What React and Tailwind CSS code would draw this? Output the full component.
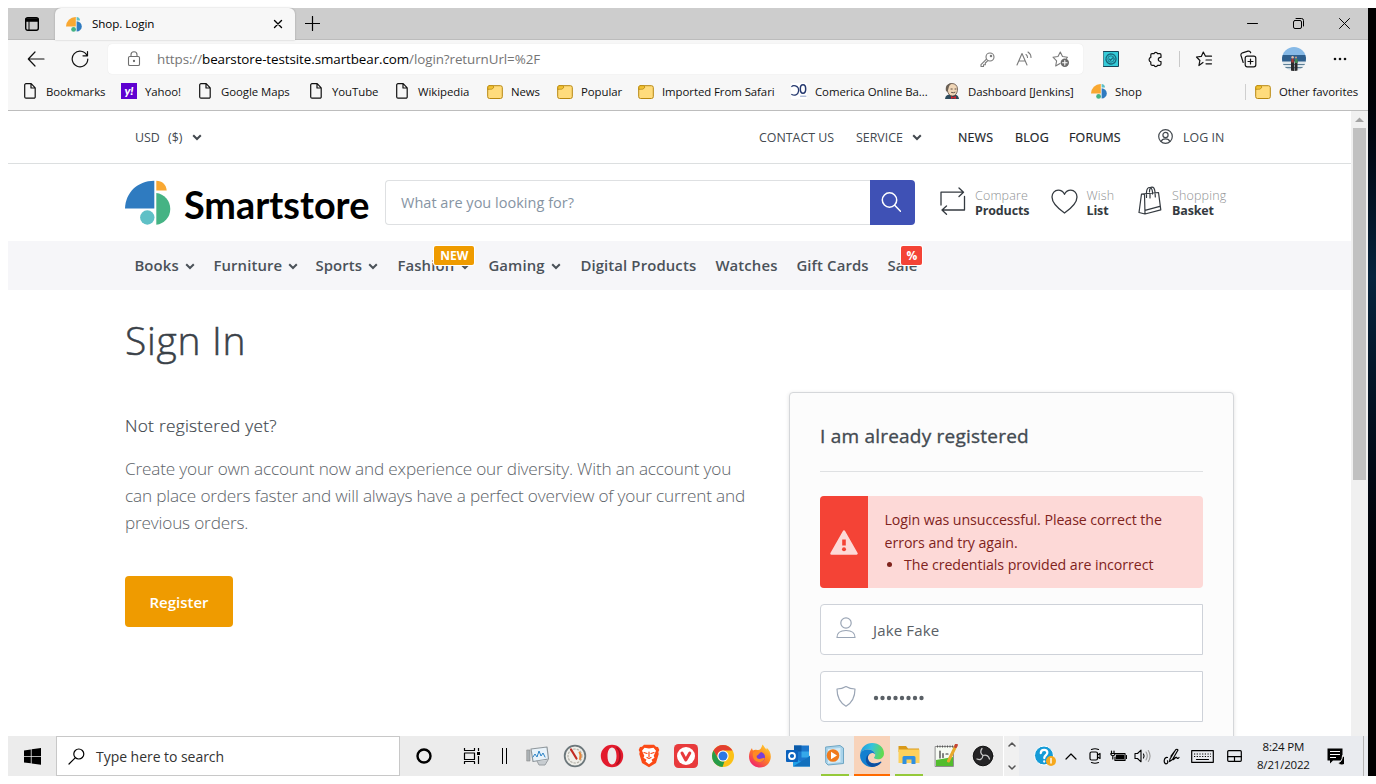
import React from "react";

const Svg = ({ w = 16, h, vb, className = "", sw = 1, children }) => (
  <svg width={w} height={h || w} viewBox={vb || `0 0 ${w} ${h || w}`} fill="none" stroke="currentColor" strokeWidth={sw} strokeLinecap="round" strokeLinejoin="round" className={"shrink-0 " + className}>
    {children}
  </svg>
);

const ShopMark = () => (
  <Svg w={16}>
    <g stroke="none">
      <path d="M0 10.500A9.500 9.500 0 0 1 9.800 1v9.500Z" fill="#f9a832" />
      <path d="M10.600 1A3.600 3.600 0 0 1 14 4.400h-3.400Z" fill="#5fc0c6" />
      <path d="M10.600 5.200a5.200 5.200 0 0 1 0 10.400Z" fill="#2f7bc0" />
      <circle cx="7.600" cy="13.400" r="2.400" fill="#45b384" />
    </g>
  </Svg>
);

const PageIcon = () => (
  <Svg w={16} sw={1.2}>
    <path d="M4 .7h5.200l4 4.200V14a1.200 1.200 0 0 1-1.200 1.200H4A1.300 1.300 0 0 1 2.700 14V2A1.300 1.300 0 0 1 4 .7ZM9 .9V5h4" />
  </Svg>
);

const FolderIcon = () => (
  <Svg w={16} sw={1} className="mt-px">
    <rect x=".7" y="1.700" width="14.600" height="12.800" rx="1.800" fill="#ffdc7c" stroke="#b8880f" />
    <path d="M.8 5V3.200C.8 2.200 1.500 1.700 2.300 1.700H5.500L7 3 5.500 4.800Z" fill="#f2c230" stroke="#b8880f" strokeWidth=".8" />
  </Svg>
);

const YahooIcon = () => (
  <span className="flex h-4 w-4 shrink-0 items-center justify-center bg-[#5f01d1] font-['Lato',sans-serif] text-[12px] leading-none font-black italic text-white">y!</span>
);

const ComericaIcon = () => (
  <Svg w={16} className="bg-white">
    <path d="M6 3.800C4 2 1.500 2.300.8 3.500M.8 11.500c2.500 1.500 6.200.5 6.700-3.200.3-2-.2-3.800-1.500-4.800" stroke="#24386e" strokeWidth="1.300" />
    <ellipse cx="12" cy="6" rx="2.700" ry="4.200" stroke="#24386e" strokeWidth="1.500" />
    <path d="M9.500 13.200h5.500" stroke="#8ea0c8" />
  </Svg>
);

const JenkinsIcon = () => (
  <Svg w={16}>
    <g stroke="none">
      <path d="M1 16c.3-3 2-4 4-4.500h6c2 .5 3.500 1.500 4 4.500Z" fill="#2c4a5c" />
      <path d="M3 5C3 2 5 .5 8 .5S13.500 2.500 13.500 6c0 4-2 7-5 7S4 10.500 3.500 8Z" fill="#f0d6b7" stroke="#4a3a30" strokeWidth=".7" />
      <path d="M2 8C1.200 4 2.500.3 8 .3 6 1.500 5 3 4.600 5L3.500 9Z" fill="#6b6156" />
      <path d="M7 13l2 1.300 3-1.300v3l-3-1-2 1Z" fill="#d8232a" />
    </g>
    <path d="M7 6h1.200M11 6h1M7.500 9.500q2 .8 3.500-.2" stroke="#3c2f28" strokeWidth=".8" />
  </Svg>
);

const favorites = [
  ["w-[99px]", PageIcon, "Bookmarks"],
  ["w-[76px]", YahooIcon, "Yahoo!"],
  ["w-[111px]", PageIcon, "Google Maps"],
  ["w-[86px]", PageIcon, "YouTube"],
  ["w-[93px]", PageIcon, "Wikipedia"],
  ["w-[70px]", FolderIcon, "News"],
  ["w-[81px]", FolderIcon, "Popular"],
  ["w-[153px]", FolderIcon, "Imported From Safari"],
  ["w-[153px]", ComericaIcon, "Comerica Online Ba..."],
  ["w-[147px]", JenkinsIcon, "Dashboard [Jenkins]"],
  ["w-[154px]", ShopMark, "Shop"],
];

function TabStrip() {
  return (
    <div className="flex h-8 border-b border-[#bcbcbc] bg-[#cdcdcd] text-black">
      <div className="flex w-[47px] items-center justify-center">
        <Svg w={16} sw={1.4}>
          <rect x="1.700" y="1.700" width="12.600" height="12.600" rx="2" />
          <path d="M2 3h12v2H2Z" fill="currentColor" />
          <path d="M5 5v9" strokeWidth="1" />
        </Svg>
      </div>
      <div className="flex h-8 w-60 items-center rounded-t-md bg-[#f7f7f7] pl-[11px] shadow-[0_0_2px_rgba(0,0,0,0.25)]">
        <ShopMark />
        <span className="ml-[10px] w-[181px] text-[11.6px] tracking-[-0.05px]">Shop. Login</span>
        <Svg w={10} sw={1.4}><path d="M1.500 1.500l7 7M8.500 1.500l-7 7" /></Svg>
      </div>
      <div className="flex w-[35px] items-center justify-center"><Svg w={15} sw={1.2}><path d="M7.500.5v14M.5 7.500h14" /></Svg></div>
      <div className="flex grow items-center justify-end gap-[35px] pr-[18px]">
        <Svg w={11} sw={1}><path d="M.5 5.500h10" /></Svg>
        <Svg w={11} sw={1}><rect x=".5" y="2.500" width="8" height="8" rx="1.500" /><path d="M3 .5h5.500a2 2 0 0 1 2 2V8" /></Svg>
        <Svg w={11} sw={1}><path d="M.5.500l10 10M10.500.500l-10 10" /></Svg>
      </div>
    </div>
  );
}

function Toolbar() {
  return (
    <div className="flex h-[38px] items-center">
      <div className="flex w-14 justify-center"><Svg w={18} sw={1.2}><path d="M17 9H1.500M8 2 1.300 9 8 16" /></Svg></div>
      <div className="flex w-8 justify-center"><Svg w={18} sw={1.2}><path d="M16 5.500A7.800 7.800 0 1 0 16.800 9M16.500 1.500v4.300h-4.500" /></Svg></div>
      <div className="ml-3 flex h-[30px] w-[975px] items-center rounded bg-white text-[#6e6e6e] shadow-[0_0_1px_rgba(0,0,0,0.12)]">
        <Svg w={14} h={16} sw={1.1} className="ml-[19px]"><rect x="1.500" y="5.500" width="11" height="9" rx="1.300" /><path d="M4 5.500V3.800a3 3 0 0 1 6 0v1.700" /><circle cx="7" cy="10" r=".6" fill="currentColor" /></Svg>
        <span className="ml-[16px] grow text-[13.4px] tracking-[-0.08px] text-[#757575]">https://<span className="text-black">bearstore-testsite.smartbear.com</span>/login?returnUrl=%2F</span>
        <div className="flex items-center gap-[20.500px] pr-[13px] text-[#7a7a7a]">
          <Svg w={15} sw={1.1}><circle cx="10" cy="5" r="4" /><circle cx="11" cy="4" r=".7" /><path d="M6.500 7.200 1 12.700V14.500h2.500v-1.800h1.800V11l2.300-2.200" /></Svg>
          <Svg w={16} sw={1.1}><path d="M1 14 6 2.500 11 14M2.800 10h6.400M10 3.500q1.500 1 1.500 3M12 1q3 2 3 5.500" /></Svg>
          <Svg w={18} sw={1.1}><path d="M8 13.500 3.700 16l.9-5.200L1 7.200l5-.7L8.300 2l2.200 4.500 5 .7-1 1.200" /><circle cx="12.800" cy="12.800" r="4.200" fill="#6a6a6a" stroke="none" /><path d="M12.800 10.500v4.600M10.500 12.800h4.600" stroke="#fff" /></Svg>
        </div>
      </div>
      <div className="flex w-14 justify-center">
        <Svg w={16}><rect x=".5" y=".5" width="15" height="15" fill="#35cbd8" stroke="#16465a" /><circle cx="8" cy="8" r="5" stroke="#17667a" strokeWidth="1.300" strokeDasharray="2 .7" /><circle cx="8" cy="8" r="3.200" stroke="#17667a" strokeWidth=".8" /><path d="m6.300 8 1.200 1.400 2.300-2.600" stroke="#17667a" strokeWidth="1.100" /></Svg>
      </div>
      <div className="flex w-8 justify-center">
        <Svg w={17} sw={1.2}><path d="M5 2.700h2a1.900 1.900 0 0 1 3.600 0h2.200q1.200 0 1.200 1.200v2.400h-.6a2 2 0 0 0 0 4.200h.6v2.600q0 1.200-1.200 1.200h-2.200a1.900 1.900 0 0 1-3.600 0H5q-1.200 0-1.200-1.200V11a2.400 2.400 0 0 1 0-4.600V3.900Q3.800 2.700 5 2.700Z" /></Svg>
      </div>
      <div className="mr-[15px] ml-2 h-4 w-px bg-[#c9c9c9]" />
      <Svg w={18} sw={1.2}><path d="M8 12.500 3.900 15.500l1-5L1.500 7l4.800-.6L8.300 2l2.200 4.200h6M11 10h5.500M11 13.800h5.500" /></Svg>
      <Svg w={18} sw={1.2} className="ml-[26px]"><rect x="6.200" y="6.200" width="10.600" height="10.600" rx="2" /><path d="M11.500 9v5M9 11.500h5M4.200 12.500 2 5.500Q1.500 3.500 3.500 2.800L9 1.200q2-.5 2.700 1.600" /></Svg>
      <Svg w={24} className="ml-[25px]">
        <defs><clipPath id="avatar"><circle cx="12" cy="12" r="12" /></clipPath></defs>
        <g clipPath="url(#avatar)" stroke="none">
          <path d="M0 0h24v9H0Z" fill="#86b9e6" /><path d="M0 8h24v7H0Z" fill="#2e5f8d" /><path d="M0 14.500h24V24H0Z" fill="#dfe7ec" />
          <path d="M0 17h24v1H0ZM2 20h20v1.200H2Z" fill="#5d7f96" />
          <path d="M9 13q1.500-3 3 0v11H9ZM12.700 13q1.300-2 2.800 1v10h-3Z" fill="#2b2a2c" />
          <path d="M13 12h2.600v4H13Z" fill="#3f8a52" /><path d="M9.300 11.500h2.400v4H9.300Z" fill="#a53b3b" />
          <circle cx="10.600" cy="10.200" r="1.200" fill="#dfbca4" /><circle cx="14" cy="10.500" r="1.100" fill="#c39c80" />
        </g>
      </Svg>
      <Svg w={14} h={4} className="ml-[27px]"><g fill="currentColor" stroke="none"><circle cx="2" cy="2" r="1.300" /><circle cx="7" cy="2" r="1.300" /><circle cx="12" cy="2" r="1.300" /></g></Svg>
    </div>
  );
}

function FavoritesBar() {
  return (
    <div className="flex h-[33px] items-center border-b border-[#bdbdbd] pb-[5px] pl-[14px]">
      {favorites.map(([w, Icon, label]) => (
        <div key={label} className={"flex shrink-0 items-center gap-2 " + w}>
          <Icon /><span className="text-[11.4px] tracking-[-0.06px] text-[#111] whitespace-nowrap">{label}</span>
        </div>
      ))}
      <div className="mr-[9px] h-4 w-px bg-[#cfcfcf]" />
      <FolderIcon /><span className="ml-2 text-[11.4px] tracking-[-0.06px] text-[#111] whitespace-nowrap">Other favorites</span>
    </div>
  );
}

const Chevron = ({ className = "" }) => (
  <Svg w={10} h={7} sw={2} className={className}><path d="M1.200 1.200 5 5l3.800-3.800" strokeLinecap="butt" strokeLinejoin="miter" /></Svg>
);

function TopMenu() {
  return (
    <div className="flex h-[53px] shrink-0 items-center border-b border-[#dcdfe0] pt-0.5 pl-[127px] text-[12.4px] text-[#43494f] whitespace-nowrap">
      <span className="w-[33px] tracking-[-0.1px]">USD</span><span className="w-[24px]">($)</span><Chevron className="mb-px" />
      <div className="ml-[557px] flex items-center">
        <span className="w-[97px]">CONTACT US</span>
        <span className="w-[56px]">SERVICE</span>
        <Chevron className="mb-px" />
        <span className="ml-[36px] w-[57px] tracking-[0.2px] text-[#212529] [-webkit-text-stroke:0.2px]">NEWS</span>
        <span className="w-[54px] tracking-[0.2px] text-[#212529] [-webkit-text-stroke:0.2px]">BLOG</span>
        <span className="w-[89px] tracking-[0.2px] text-[#212529] [-webkit-text-stroke:0.2px]">FORUMS</span>
        <Svg w={15} sw={1.2} className="-mt-0.5"><circle cx="7.500" cy="7.500" r="6.800" /><circle cx="7.500" cy="6" r="2.600" /><path d="M3.200 12.500q.8-2.600 4.300-2.600t4.300 2.600" /></Svg>
        <span className="ml-[10px] tracking-[0.05px]">LOG IN</span>
      </div>
    </div>
  );
}

function Tool({ icon, top, bottom, className }) {
  return (
    <div className={"flex items-center " + className}>
      {icon}
      <div className="flex flex-col text-[12.500px] leading-[15px] whitespace-nowrap">
        <span className="font-light tracking-[0.15px] text-[#8f9294]">{top}</span>
        <span className="font-bold tracking-[-0.15px] text-[#343a40]">{bottom}</span>
      </div>
    </div>
  );
}

function Header() {
  return (
    <div className="flex h-[77px] shrink-0 items-center pl-[117px]">
      <Svg w={48} h={45}>
        <g stroke="none">
          <path d="M0 28.500C.5 13 12 1 29.300.8v27.700Z" fill="#2f7bc0" />
          <path d="M31.300.8c6 0 10 4 10.400 9.700H31.300Z" fill="#f9a832" />
          <path d="M31.300 13a15.700 16 0 0 1 0 31.800Z" fill="#45b384" />
          <circle cx="22.300" cy="37.500" r="7.200" fill="#5fc0c6" />
        </g>
      </Svg>
      <span className="ml-[11px] mt-[4px] w-[201px] font-['Lato',sans-serif] text-[37.800px] leading-none font-bold text-black">Smartstore</span>
      <div className="flex h-[45px] w-[485px] items-center rounded-l border border-r-0 border-[#dee0e2] pl-[15px] text-[14.500px] tracking-[0.02px] text-[#8694a3]">What are you looking for?</div>
      <div className="flex h-[45px] w-[45px] items-center justify-center rounded-r bg-[#3f51b5] pr-[3px] pb-[2px] text-white">
        <Svg w={20} sw={1.500}><circle cx="8.500" cy="8" r="7.200" /><path d="m13.700 13.300 5.800 6" /></Svg>
      </div>
      <div className="flex items-center text-[#343a40]">
        <Tool className="ml-[25px] w-[110.500px]" top="Compare" bottom="Products" icon={
          <Svg w={26} h={28} sw={1.3} className="mr-[9px] mb-[4px]"><path d="M1 18V5.200h22.500M19 1l4.500 4.200L19 9.500M24.500 9.500V23H2M6.500 19 2 23l4.500 4.200" /></Svg>} />
        <Tool className="w-[87.500px]" top="Wish" bottom="List" icon={
          <Svg w={27} h={25} sw={1.3} className="mr-[9px] mb-[3px]"><path d="M13.500 24C8.500 20.500 1 15 1 8 1 4 3.800 1.200 7.200 1.200c2.900 0 5.100 1.700 6.300 4.100 1.200-2.400 3.400-4.100 6.300-4.100C23.200 1.200 26 4 26 8c0 7-7.500 12.500-12.500 16Z" /></Svg>} />
        <Tool className="" top="Shopping" bottom="Basket" icon={
          <Svg w={24} h={29} sw={1.200} className="mr-[10px] mb-[4px]"><path d="M3.500 8 20.500 6.500 22.800 23.800 7 28 1 26.500ZM3.500 8 6.500 8.500 7 28M7 24.300l14.800-4M8.500 11.500V6q.5-4.500 3-4.500t3 4.500v2M11.500 6q0-4.800 2.500-4.800T17 6l.3 5M12 8v4" /></Svg>} />
      </div>
    </div>
  );
}

const nav = [
  ["w-[79px]", "Books", true],
  ["w-[102px]", "Furniture", true],
  ["w-[82px]", "Sports", true],
  ["w-[91px]", "Fashion", true, "NEW", "bg-[#ef9b00] left-[37px] w-10"],
  ["w-[92px]", "Gaming", true],
  ["w-[135px]", "Digital Products"],
  ["w-[81px]", "Watches"],
  ["w-[91px]", "Gift Cards"],
  ["w-[50px]", "Sale", false, "%", "bg-[#f44336] left-[14px] w-[21px]"],
];

function Nav() {
  return (
    <div className="flex h-[49px] shrink-0 items-center bg-[#f6f6f9] pl-[126.400px] text-[14.900px] font-semibold tracking-[0.120px] text-[#4b5259]">
      {nav.map(([w, label, more, badge, badgeClass]) => (
        <div key={label} className={"relative flex shrink-0 items-center whitespace-nowrap " + w}>
          <span>{label}</span>
          {more && <Chevron className="mt-0.5 ml-[6px]" />}
          {badge && <span className={"absolute top-[-8px] flex h-[19px] items-center justify-center rounded-xs text-[12px] font-bold tracking-normal text-white shadow-[0_0_0_1px_#ffffff] " + badgeClass}>{badge}</span>}
        </div>
      ))}
    </div>
  );
}

function Field({ icon, children }) {
  return (
    <div className="mt-4 flex h-[51px] items-center rounded-l border border-[#ced2d9] bg-white pl-[15px] text-[#9aa5b5]">
      {icon}
      <span className="ml-[17px] mt-px text-[15px] tracking-[0.15px] text-[#5a6066]">{children}</span>
    </div>
  );
}

function SignIn() {
  return (
    <div className="flex shrink-0 flex-col pl-[117px]">
      <h1 className="mt-[20px] text-[39px] leading-[60px] font-light tracking-[0.700px] text-[#3a4148] [-webkit-text-stroke:0.5px]">Sign In</h1>
      <div className="flex">
        <div className="w-[664px] pt-[42px]">
          <h2 className="text-[17.300px] leading-[28px] font-light tracking-[0.260px] text-[#43494f] [-webkit-text-stroke:0.2px]">Not registered yet?</h2>
          <p className="mt-[15px] w-[640px] text-[17.200px] leading-[27px] font-light tracking-[-0.180px] whitespace-nowrap text-[#5d6369]">Create your own account now and experience our diversity. With an account you<br />can place orders faster and will always have a perfect overview of your current and<br />previous orders.</p>
          <button className="mt-[40px] h-[51px] w-[108px] rounded bg-[#ef9b00] pt-0.5 text-[15px] font-semibold text-white">Register</button>
        </div>
        <div className="mt-[22px] h-[400px] w-[445px] rounded border border-[#d5d7da] bg-[#fcfcfc] px-[30px] shadow-[0_1px_4px_rgba(0,0,0,0.12)]">
          <div className="flex h-[79px] items-center border-b border-[#dfe1e3] pt-[9px] text-[19px] tracking-[0.220px] text-[#434a51] [-webkit-text-stroke:0.35px]">I am already registered</div>
          <div className="mt-6 flex h-[92px] overflow-hidden rounded bg-[#fdd9d7]">
            <div className="flex w-12 items-center justify-center bg-[#f44336] text-[#fdd9d7]">
              <Svg w={28} h={25}><path d="M14 1.500 26.500 23.500H1.500Z" fill="currentColor" strokeWidth="2.500" /><path d="M14 9.500v6" stroke="#f44336" strokeWidth="3.600" strokeLinecap="butt" /><circle cx="14" cy="19.300" r="2" fill="#f44336" stroke="none" /></Svg>
            </div>
            <div className="pt-[13px] pl-[16.500px] text-[14.200px] leading-[22.500px] tracking-[-0.060px] whitespace-nowrap text-[#7f231c]">
              <div>Login was unsuccessful. Please correct the<br />errors and try again.</div>
              <ul className="list-disc pl-[19.500px]"><li>The credentials provided are incorrect</li></ul>
            </div>
          </div>
          <Field icon={<Svg w={20} h={22} sw={1.200} className="-mt-1"><circle cx="10" cy="6" r="5.200" /><path d="M1 20.500c0-5 4-7 9-7s9 2 9 7Z" /></Svg>}>Jake Fake</Field>
          <Field icon={<Svg w={20} h={22} sw={1.200} className="-mt-0.5"><path d="M10 1.500q4 2.500 9 2.500 0 12-9 17.200Q1 16 1 4q5 0 9-2.500Z" /></Svg>}>
            <svg width="52" height="8" viewBox="0 0 52 8" fill="#5a6066" role="img" aria-label="password" className="mt-0.5">
              {[0, 1, 2, 3, 4, 5, 6, 7].map((i) => <circle key={i} cx={3 + i * 6.5} cy="4" r="2.200" />)}
            </svg>
          </Field>
        </div>
      </div>
    </div>
  );
}

const PerfIcon = () => (
  <Svg w={24}><path d="M1 6h3v11H1Z" fill="#aab0b3" stroke="#888" strokeWidth=".6" /><path d="M5 5 21 3l1.500 12L7 17.500Z" fill="#e9f3fa" stroke="#8f979c" strokeWidth="1.200" /><path d="m7 13 2-3 2 3 2-6 2 5 2-3 2 4" stroke="#2c83c6" strokeWidth="1" /><path d="m11 17 2 4h6l3-5" fill="#c7ccd0" stroke="#989ea2" /></Svg>
);
const GaugeIcon = () => (
  <Svg w={24}><circle cx="12" cy="12" r="10.300" fill="#efeee9" stroke="#6c777b" strokeWidth="1.800" /><circle cx="12" cy="12" r="7" stroke="#b5b2a8" strokeWidth="1.200" strokeDasharray="1.500 2" /><path d="M16.500 8.500q2 2.500.5 6.500" stroke="#e8863a" strokeWidth="2" /><path d="m8 5.500 5.500 9" stroke="#c22a22" strokeWidth="2.200" /></Svg>
);
const OperaIcon = () => (
  <Svg w={24}><path fillRule="evenodd" d="M12 .8a11.200 11.200 0 1 1 0 22.400A11.200 11.200 0 0 1 12 .8Zm0 2.700C9.300 3.500 7.500 7 7.500 12s1.800 8.500 4.500 8.500 4.500-3.500 4.500-8.500S14.700 3.500 12 3.500Z" fill="#e31b2d" stroke="none" /><path d="M17 4C21 7 21 17 17 20" stroke="#a60f20" strokeWidth="1.500" /></Svg>
);
const BraveIcon = () => (
  <Svg w={24}><path d="M7 .7h10l2 2 2 .3 1.300 3-1 2 .4 2-2.700 9-7 4.300-7-4.300-2.700-9 .4-2-1-2L3 3l2-.3Z" fill="#fb4a16" stroke="none" /><path d="m12 4.500 4.500-.8 2.500 3-2.300 5 .8 2-3 2 1 1.800-3.500 2.700-3.500-2.700 1-1.800-3-2 .8-2-2.300-5 2.500-3Z" fill="#fff" stroke="none" /><path d="m7 8.500 3 1M17 8.500l-3 1M12 8v4.500M10 13.500l2 1 2-1" stroke="#fb4a16" strokeWidth="1.200" /></Svg>
);
const VivaldiIcon = () => (
  <Svg w={24}><rect width="24" height="24" rx="4.500" fill="#e83a3c" stroke="none" /><circle cx="12" cy="12" r="9" fill="#fff" stroke="none" /><path d="m8 9 3.800 7 4-7" stroke="#e83a3c" strokeWidth="3" /></Svg>
);
const ChromeIcon = () => (
  <Svg w={24}><g stroke="none"><circle cx="12" cy="12" r="11" fill="#fbc116" /><path d="M2.500 6.500A11 11 0 0 1 21.500 6.500H12A5.500 5.500 0 0 0 7.200 14.700Z" fill="#e23e30" /><path d="M2.500 6.500 7.200 14.700A5.500 5.500 0 0 0 13.500 17.300L11.500 23A11 11 0 0 1 2.500 6.500Z" fill="#269c4a" /><circle cx="12" cy="12" r="5.600" fill="#fff" /><circle cx="12" cy="12" r="4.500" fill="#2b78e4" /></g></Svg>
);
const FirefoxIcon = () => (
  <Svg w={24}><defs><linearGradient id="fx" x1="1" y1="0" x2=".3" y2="1"><stop offset="0" stopColor="#ffe03a" /><stop offset=".5" stopColor="#ff8a1e" /><stop offset="1" stopColor="#f0246b" /></linearGradient></defs><g stroke="none"><path d="M14.500.5c2 2 2.500 4 4 5 .3-1 .2-1.500 0-2 3 2.500 4.500 6 4.300 9.500C22.500 19 18 23.500 12 23.500S1 19 1 12.500c0-3 1-6 3-8.500 0 1 .3 1.800 1 2.500 1.200-.7 2.500-1 4-.5 1.500.3 2.700 0 3.500-1C13.500 3.500 14 2 14.500.5Z" fill="url(#fx)" /><circle cx="12" cy="13" r="5" fill="#7a3fd6" /><path d="M5 8.500c3-2 6.500-1.500 8 .5-2.500 0-2 2-4 2.500-1 1 0 3.500 2.500 3.500 2 0 3-1.500 5.300-.7-1.500 3.200-4 4.200-6.300 3.700C6 17 4 13 5 8.500Z" fill="#ff8a24" /></g></Svg>
);
const OutlookIcon = () => (
  <Svg w={24}><g stroke="none"><path d="M8 1.500h15V20H8Z" fill="#1b76cc" /><path d="M8 1.500h7.500v6H8Z" fill="#0b5aa8" /><path d="M15.500 7.500H23v6h-7.500Z" fill="#35a8ea" /><path d="M7 12.500 15.500 18 24 11.500V22.500H7Z" fill="#1fa0e8" /><path d="M7 22.500 24 12v10.500Z" fill="#1270bd" /><rect y="6" width="12" height="12" rx="1" fill="#0c62bd" /></g><circle cx="6" cy="12" r="3" stroke="#fff" strokeWidth="1.800" /></Svg>
);
const PlayerIcon = () => (
  <Svg w={24}><path d="m3 4 14-1.500L20.500 5v15.500L5 22l-2-2Z" fill="#a9d3ea" stroke="#6ea6c4" /><path d="m5 6 12.500-1v14L5 20.500Z" fill="#d4ebf6" stroke="none" /><circle cx="10" cy="12.500" r="6.300" fill="#f07a1d" stroke="none" /><path d="M8 8.800v7.400l6-3.700Z" fill="#fff" stroke="none" /></Svg>
);
const EdgeIcon = () => (
  <Svg w={24}><defs><linearGradient id="eg" x1="0" y1="0" x2="1" y2=".2"><stop offset="0" stopColor="#1f95dc" /><stop offset=".5" stopColor="#34c2df" /><stop offset="1" stopColor="#61da53" /></linearGradient></defs><g stroke="none"><path d="M.2 11C1 4.500 6 .1 12.200.1 19 .1 24 4.800 24 10.500c0 3.500-2.600 5.800-6.200 5.800-2.300 0-3.800-.8-3.800-1.500 0-.6 1.200-1 1.200-3 0-2.200-2.600-5.200-7-5.200C4 6.600 1 8.500.2 11Z" fill="url(#eg)" /><path d="M.1 12C.5 8.200 4 6.600 8 6.600c4.500 0 7.200 3 7.200 5-.8-1-1.800-1.500-3-1.500-2.800 0-4.300 2.300-4.300 4.600 0 5 6 7.300 11.600 5.300C17.800 22.500 15 24 12 24 5.500 24-.4 19 .1 12Z" fill="#1380d0" /><path d="M7.900 14.500c0 5 5 8 12.500 4.200.7-.3 1.300.3.9.9A12 12 0 0 1 12 24C8 23 5.300 19.500 6 15.500 6.500 12.500 9 10.500 12 10.100 9.500 10.500 7.900 12.200 7.900 14.500Z" fill="#0e4fa0" /></g></Svg>
);
const ExplorerIcon = () => (
  <Svg w={24}><g stroke="none"><path d="M1.500 3h7.500l2 2.500H22V9H1.500Z" fill="#d99a1b" /><path d="M1.500 6.500h21V20h-21Z" fill="#fdd15c" /><path d="M5.500 21v-6.500q0-1.500 1.500-1.500h10q1.500 0 1.500 1.500V21h-4v-4.500h-5V21Z" fill="#2f8fe0" /></g></Svg>
);
const NotesIcon = () => (
  <Svg w={24}><rect x="1.500" y="2.500" width="18" height="20" fill="#f6faf3" stroke="#8f8f8f" /><path d="M2 16 19 13v9H2Z" fill="#53bd2e" stroke="none" /><path d="M3 2.500h16" stroke="#555" strokeWidth="2" strokeDasharray="1 1.500" strokeLinecap="butt" /><path d="M6 7v7M9 9.500v4M12 10h2" stroke="#333" strokeWidth="1.200" /><path d="M22 1.500 14.500 17" stroke="#e9a92b" strokeWidth="3" /><path d="m22.300 1-.6 1.500" stroke="#c4453a" strokeWidth="3" /></Svg>
);
const ObsIcon = () => (
  <Svg w={24}><circle cx="12" cy="12" r="9.800" fill="#252426" stroke="#111" /><path d="M11 4.500Q8 8.500 12 11.500M12 11.500q5-1.500 6.500 3.500M12 11.500Q11 17 6 15" stroke="#c9c9c9" strokeWidth="1.300" /></Svg>
);

const apps = [
  [PerfIcon, ""], [GaugeIcon, ""], [OperaIcon, ""], [BraveIcon, ""], [VivaldiIcon, ""], [ChromeIcon, ""], [FirefoxIcon, ""], [OutlookIcon, ""],
  [PlayerIcon, "w-7 border-b-2 border-[#95c93a]"],
  [EdgeIcon, "w-9 border-b-2 border-[#ff6a00] bg-[#f8d3ba]"],
  [ExplorerIcon, "w-7 border-b-2 border-[#95c93a]"],
  [NotesIcon, ""], [ObsIcon, ""],
];

function Taskbar() {
  return (
    <div className="flex h-10 shrink-0 bg-[#ececec] text-black">
      <div className="flex w-12 items-center justify-center">
        <svg width="17" height="17" viewBox="0 0 17 17"><path d="M0 2.400 6.800 1.500V8H0ZM7.600 1.300 17 0v8H7.600ZM0 8.800h6.800v6.500L0 14.400ZM7.600 8.800H17v7.900l-9.400-1.300Z" fill="#000" /></svg>
      </div>
      <div className="flex w-[344px] items-center border border-[#c8c8c8] bg-white pl-[11px]">
        <Svg w={17} sw={1.200}><circle cx="10.800" cy="6" r="5" /><path d="M7.200 9.800 1 16" /></Svg>
        <span className="ml-[11px] text-[14px] tracking-[-0.04px] text-[#333]">Type here to search</span>
      </div>
      <div className="flex w-12 items-center justify-center"><Svg w={16} sw={2.400}><circle cx="8" cy="8" r="6.500" /></Svg></div>
      <div className="flex w-12 items-center justify-center"><Svg w={18} sw={1.200}><path d="M1.500 1v2.500h10V1M1.500 17v-2.500h10V17M1.500 6h10v6.500h-10ZM15.500 1v3M15.500 9v8" strokeLinecap="butt" /><path d="M14 5h3v3h-3Z" fill="currentColor" stroke="none" /></Svg></div>
      <div className="flex w-4 items-center justify-center gap-[3px]"><span className="h-4 w-px bg-black" /><span className="h-4 w-px bg-black" /></div>
      <div className="ml-[7px] flex">
        {apps.map(([Icon, cls], i) => (
          <div key={i} className="flex w-[37.150px] shrink-0 justify-center">
            <div className={"flex h-10 items-center justify-center " + cls}><Icon /></div>
          </div>
        ))}
      </div>
      <div className="ml-[1.500px] flex w-4 flex-col items-center justify-between border-l border-white bg-[#f0f0f0] py-[6px] text-[#555]">
        <Svg w={8} h={5} sw={1.500}><path d="M1 4 4 1l3 3" /></Svg>
        <Svg w={8} h={5} sw={1.500}><path d="M1 1l3 3 3-3" /></Svg>
      </div>
      <div className="flex grow items-center bg-[#e9ebef]">
        <Svg w={22} className="ml-[15px]"><circle cx="10" cy="10.500" r="9.500" fill="#159bd7" stroke="#fff" /><path d="M6.800 8c.2-4.500 7-4 6.500 0-.2 2-3 2.300-3 5M10.200 16.500v.1" stroke="#fff" strokeWidth="2.300" /><circle cx="17" cy="16" r="5" fill="#f6a81c" stroke="none" /><path d="M17 13.500v4.500" stroke="#fff" strokeWidth="1.400" /></Svg>
        <Svg w={12} h={7} sw={1.200} className="ml-[9px]"><path d="m1 6 5-5 5 5" /></Svg>
        <Svg w={12} h={16} sw={1.200} className="ml-[12px]"><path d="M2.500 1.500q3.500-1.500 7 0M2.500 14.500q3.500 1.500 7 0" /><rect x="1" y="4" width="7.500" height="8" rx="1.500" /><path d="M8.500 7 11 5.500v5L8.500 9" /></Svg>
        <Svg w={17} h={12} sw={1.200} className="ml-[9px]"><path d="M5 3.500h10v7H5V7" /><path d="M6.500 5h7v4h-7Z" fill="currentColor" /><path d="M16.500 5.500v3M1.500 1v2M4 1v2M.800 3.500H5c0 3-4.200 3-4.200 0ZM2.800 6v3" /></Svg>
        <Svg w={17} h={14} sw={1.100} className="ml-[7px]"><path d="M1 4.500h2.500L7 1.200v11.600L3.500 9.500H1Z" /><path d="M9.500 5q1.200 2 0 4" /><path d="M12 3q2.500 4 0 8M14.300 1.500q3.500 5.500 0 11" stroke="#999" /></Svg>
        <Svg w={17} h={17} sw={1.200} className="ml-[12px]"><path d="M4.500 9.500C1 8.500 0 15.500 3 15.800c2 0 2-2 1.500-3M6.500 13.500 7 11l5.500-9q1.500-1.500 2.500 0L9.500 11.500 6.500 13.500M11 4 8 8.200M10.500 11.500q3-3.500 3.500-1.500 1 1 2-.5" /></Svg>
        <Svg w={23} h={13} sw={1.200} className="ml-[11px]"><rect x=".7" y=".7" width="21.600" height="11.600" /><path d="M3 4h17M3 6.500h17" strokeDasharray="1.200 1.500" strokeLinecap="butt" /><path d="M5.500 9.500h12" /></Svg>
        <Svg w={15} h={12} sw={1.200} className="ml-[13px]"><rect x=".7" y=".7" width="13.600" height="10.600" rx="1" /><path d="M.7 6.700h13.600M7.500 6.700v4.500" /></Svg>
        <div className="ml-[12px] flex w-[58px] flex-col items-center text-[11.500px] leading-[18px] tracking-[-0.2px] text-[#111]"><span>8:24 PM</span><span>8/21/2022</span></div>
        <Svg w={17} h={17} className="ml-[15px]"><path d="M.500.500h15v12H6l-3 3v-3H.500Z" fill="#000" stroke="none" /><path d="M3 3.500h10M3 6.500h10M3 9.500h6" stroke="#fff" strokeLinecap="butt" /><path d="M15.500 8a4.500 4.500 0 1 1-4.500 6.500q4 0 4.500-6.500Z" fill="#000" stroke="#eee" /></Svg>
        <span className="ml-auto mr-1 h-10 w-px bg-[#b5b5b5]" />
      </div>
    </div>
  );
}

export default function App() {
  return (
    <div className="flex h-[784px] w-[1376px] overflow-hidden bg-white pt-2 pb-2 pl-2 font-['Open_Sans','Noto_Sans',sans-serif]">
      <div className="flex h-[768px] w-[1360px] flex-col">
        <div className="shrink-0 bg-[#f7f7f7] text-[#111]">
          <TabStrip />
          <Toolbar />
          <FavoritesBar />
        </div>
        <div className="flex h-[625px] overflow-hidden">
          <div className="flex w-[1343px] shrink-0 flex-col overflow-hidden bg-white">
            <TopMenu />
            <Header />
            <Nav />
            <SignIn />
          </div>
          <div className="flex w-[17px] flex-col items-center bg-[#f0f0f0]">
            <Svg w={9} h={17}><path d="M0 11 4.500 6.500 9 11Z" fill="#a3a3a3" stroke="none" /></Svg>
            <div className="h-[352px] w-[13px] bg-[#c1c1c1]" />
          </div>
        </div>
        <Taskbar />
      </div>
      <div className="w-2 bg-linear-to-b from-black from-0% via-[#06233d] via-35% to-black to-90%" />
    </div>
  );
}
